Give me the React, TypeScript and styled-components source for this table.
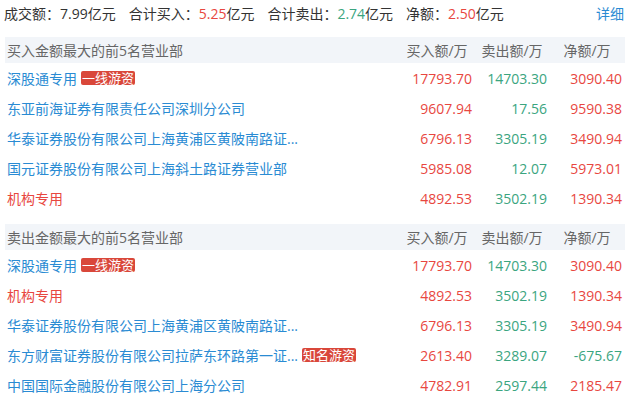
import React, { FC } from 'react'
import styled, { createGlobalStyle } from 'styled-components'

const RED = '#e8473f'
const GREEN = '#3ba57f'
const BLUE = '#2a8bd3'

const GlobalStyle = createGlobalStyle`
  html, body {
    margin: 0;
    padding: 0;
    background: #fff;
  }
  body {
    font-family: "Open Sans", "Noto Sans CJK SC", sans-serif;
    font-size: 14px;
    color: #333;
  }
`

const Page = styled.div`
  width: 631px;
  padding: 0 6px 0 5px;
  box-sizing: border-box;
`

const Summary = styled.div`
  height: 26px;
  margin: 0 0 11px -1px;
  display: flex;
  align-items: center;
  gap: 13px;
  white-space: nowrap;
`

const Stat = styled.span``

const Value = styled.span<{ $tone?: 'red' | 'green' }>`
  color: ${p => (p.$tone === 'red' ? RED : p.$tone === 'green' ? GREEN : '#333')};
`

const More = styled.a`
  margin-left: auto;
  margin-right: 1px;
  color: ${BLUE};
  text-decoration: none;
  cursor: pointer;
`

const Section = styled.div`
  & + & {
    margin-top: 11px;
  }
`

const Grid = styled.div`
  display: grid;
  grid-template-columns: 1fr 75px 75px 75px 3px;
  align-items: center;
`

const HeadRow = styled(Grid)`
  height: 26px;
  background: #f2f5f9;
  color: #666;
`

const HeadTitle = styled.div`
  padding-left: 2px;
`

const HeadCell = styled.div`
  text-align: center;
  padding-left: 5px;
`

const Row = styled(Grid)`
  height: 30px;
`

const Name = styled.div<{ $inst?: boolean }>`
  padding-left: 2px;
  display: flex;
  align-items: center;
  gap: 4px;
  white-space: nowrap;
  color: ${p => (p.$inst ? RED : BLUE)};
  cursor: pointer;
`

const Badge = styled.span`
  display: inline-block;
  height: 14px;
  line-height: 14px;
  padding: 0 1px;
  font-size: 13px;
  color: #fff;
  background: #d9473a;
  border-radius: 2px;
`

const Num = styled.div<{ $tone: 'red' | 'green' }>`
  text-align: right;
  color: ${p => (p.$tone === 'red' ? RED : GREEN)};
`

interface Seat {
  name: string
  tag?: string
  inst?: boolean
  buy: string
  sell: string
  net: string
}

const buyTop: Seat[] = [
  { name: '深股通专用', tag: '一线游资', buy: '17793.70', sell: '14703.30', net: '3090.40' },
  { name: '东亚前海证券有限责任公司深圳分公司', buy: '9607.94', sell: '17.56', net: '9590.38' },
  { name: '华泰证券股份有限公司上海黄浦区黄陂南路证...', buy: '6796.13', sell: '3305.19', net: '3490.94' },
  { name: '国元证券股份有限公司上海斜土路证券营业部', buy: '5985.08', sell: '12.07', net: '5973.01' },
  { name: '机构专用', inst: true, buy: '4892.53', sell: '3502.19', net: '1390.34' },
]

const sellTop: Seat[] = [
  { name: '深股通专用', tag: '一线游资', buy: '17793.70', sell: '14703.30', net: '3090.40' },
  { name: '机构专用', inst: true, buy: '4892.53', sell: '3502.19', net: '1390.34' },
  { name: '华泰证券股份有限公司上海黄浦区黄陂南路证...', buy: '6796.13', sell: '3305.19', net: '3490.94' },
  { name: '东方财富证券股份有限公司拉萨东环路第一证...', tag: '知名游资', buy: '2613.40', sell: '3289.07', net: '-675.67' },
  { name: '中国国际金融股份有限公司上海分公司', buy: '4782.91', sell: '2597.44', net: '2185.47' },
]

const SeatTable: FC<{ title: string; rows: Seat[] }> = ({ title, rows }) => (
  <Section>
    <HeadRow>
      <HeadTitle>{title}</HeadTitle>
      <HeadCell>买入额/万</HeadCell>
      <HeadCell>卖出额/万</HeadCell>
      <HeadCell>净额/万</HeadCell>
      <div />
    </HeadRow>
    {rows.map((r, i) => (
      <Row key={i}>
        <Name $inst={r.inst}>
          {r.name}
          {r.tag && <Badge>{r.tag}</Badge>}
        </Name>
        <Num $tone="red">{r.buy}</Num>
        <Num $tone="green">{r.sell}</Num>
        <Num $tone={r.net.startsWith('-') ? 'green' : 'red'}>{r.net}</Num>
        <div />
      </Row>
    ))}
  </Section>
)

const App: FC = () => (
  <Page>
    <GlobalStyle />
    <Summary>
      <Stat>成交额：<Value>7.99</Value>亿元</Stat>
      <Stat>合计买入：<Value $tone="red">5.25</Value>亿元</Stat>
      <Stat>合计卖出：<Value $tone="green">2.74</Value>亿元</Stat>
      <Stat>净额：<Value $tone="red">2.50</Value>亿元</Stat>
      <More>详细</More>
    </Summary>
    <SeatTable title="买入金额最大的前5名营业部" rows={buyTop} />
    <SeatTable title="卖出金额最大的前5名营业部" rows={sellTop} />
  </Page>
)

export default App
